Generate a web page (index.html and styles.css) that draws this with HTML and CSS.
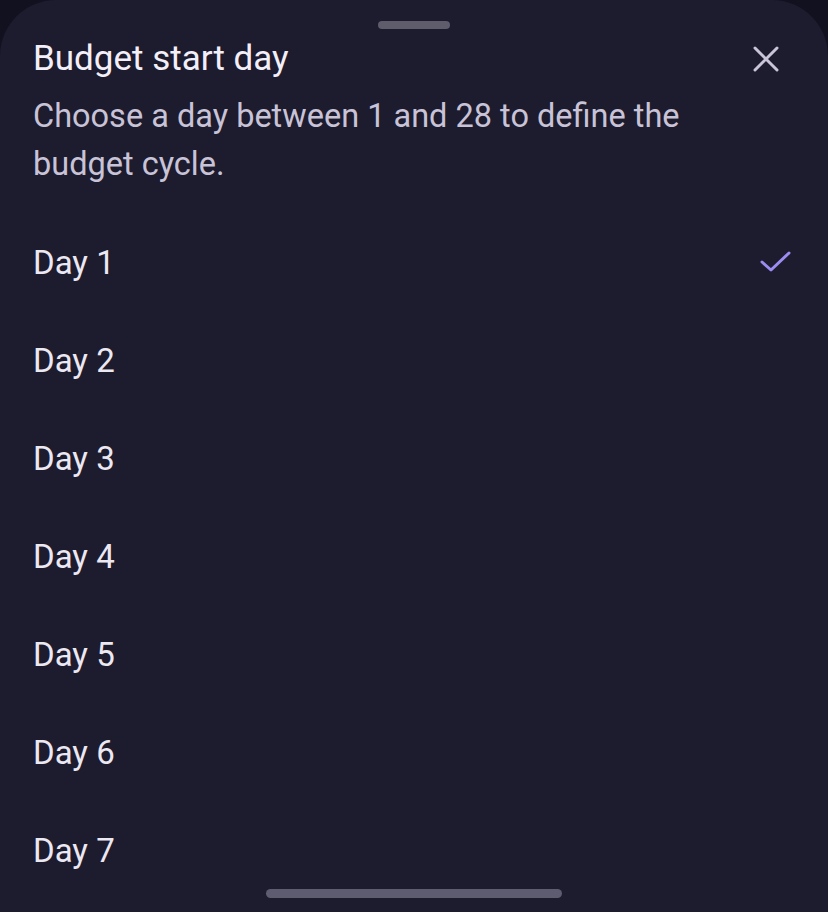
FILE: index.html
```html
<!DOCTYPE html>
<html>
<head>
<meta charset="utf-8">
<link rel="stylesheet" href="styles.css">
</head>
<body>
<div class="sheet">
  <div class="handle"></div>
  <div class="header">
    <h1 class="title">Budget start day</h1>
    <button class="close" aria-label="Close">
      <svg width="28" height="28" viewBox="0 0 28 28"><path d="M3 3 L25 25 M25 3 L3 25" stroke="#cac4d8" stroke-width="3" stroke-linecap="round" fill="none"/></svg>
    </button>
  </div>
  <p class="desc">Choose a day between 1 and 28 to define the budget cycle.</p>
  <ul class="list">
    <li class="item selected"><span>Day 1</span>
      <svg class="check" width="32" height="24" viewBox="0 0 32 24"><path d="M2 12 L11 20 L29 3" stroke="#9a8cf0" stroke-width="3" stroke-linecap="round" stroke-linejoin="round" fill="none"/></svg>
    </li>
    <li class="item"><span>Day 2</span></li>
    <li class="item"><span>Day 3</span></li>
    <li class="item"><span>Day 4</span></li>
    <li class="item"><span>Day 5</span></li>
    <li class="item"><span>Day 6</span></li>
    <li class="item"><span>Day 7</span></li>
  </ul>
</div>
<div class="navbar"></div>
</body>
</html>
```
FILE: styles.css
```css
html, body {
  margin: 0;
  padding: 0;
  background: #121120;
  height: 912px;
  overflow: hidden;
  font-family: Roboto, "Noto Sans", sans-serif;
}
.sheet {
  background: #1d1b2e;
  border-radius: 56px 56px 0 0;
  height: 912px;
  padding: 0 34px 0 33px;
  box-sizing: border-box;
  display: flex;
  flex-direction: column;
}
.handle {
  align-self: center;
  width: 72px;
  height: 8px;
  border-radius: 4px;
  background: #5f5d6c;
  margin-top: 21px;
}
.header {
  display: flex;
  justify-content: space-between;
  align-items: center;
  margin-top: 10px;
}
.title {
  margin: 0;
  font-size: 35px;
  font-weight: 400;
  line-height: 40px;
  color: #f3eff8;
}
.close {
  background: none;
  border: none;
  padding: 0;
  margin-right: 14px;
  width: 28px;
  height: 28px;
  display: flex;
}
.desc {
  margin: 13px 0 0;
  font-size: 32.5px;
  line-height: 48px;
  color: #c8c3d6;
  max-width: 690px;
}
.list {
  list-style: none;
  margin: 25px 0 0;
  padding: 0;
}
.item {
  height: 98px;
  display: flex;
  align-items: center;
  justify-content: space-between;
  font-size: 33px;
  color: #ece8f2;
}
.check {
  margin-right: 2px;
}
.navbar {
  position: absolute;
  left: 266px;
  top: 889px;
  width: 296px;
  height: 9px;
  border-radius: 5px;
  background: #5e5c70;
}
```
